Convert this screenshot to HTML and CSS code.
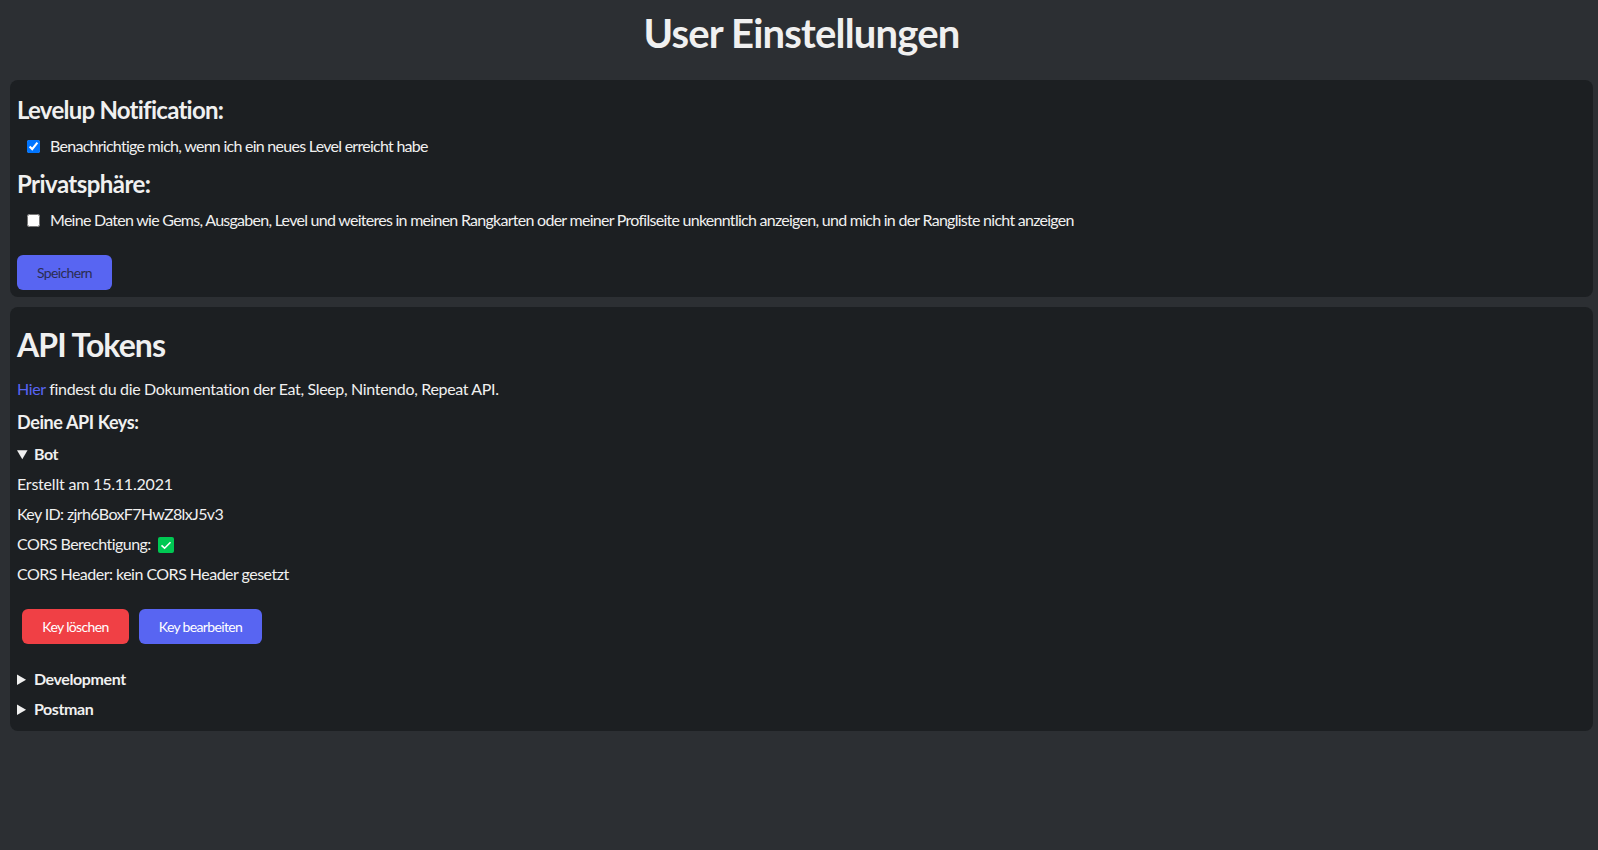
FILE: index.html
```html
<!DOCTYPE html>
<html lang="de">
<head>
<meta charset="utf-8">
<title>User Einstellungen</title>
<link rel="stylesheet" href="styles.css">
</head>
<body>
<h1 class="title">User Einstellungen</h1>
<section class="card settings">
  <h2 class="section-head">Levelup Notification:</h2>
  <label class="check-row"><input type="checkbox" checked><span>Benachrichtige mich, wenn ich ein neues Level erreicht habe</span></label>
  <h2 class="section-head section-head-loose">Privatsphäre:</h2>
  <label class="check-row"><input type="checkbox"><span>Meine Daten wie Gems, Ausgaben, Level und weiteres in meinen Rangkarten oder meiner Profilseite unkenntlich anzeigen, und mich in der Rangliste nicht anzeigen</span></label>
  <button class="btn btn-save">Speichern</button>
</section>
<section class="card tokens">
  <h2 class="tokens-title">API Tokens</h2>
  <p class="intro"><a href="#">Hier</a> findest du die Dokumentation der Eat, Sleep, Nintendo, Repeat API.</p>
  <h3 class="keys-head">Deine API Keys:</h3>
  <details open>
    <summary>Bot</summary>
    <p class="line line-date">Erstellt am 15.11.2021</p>
    <p class="line line-id">Key ID: zjrh6BoxF7HwZ8lxJ5v3</p>
    <p class="line">CORS Berechtigung: <span class="tick"><svg viewBox="0 0 16 16" width="16" height="16"><rect width="16" height="16" rx="2" fill="#00c853"/><path d="M3.5 8.3 6.6 11.2 12.5 5.3" fill="none" stroke="#fff" stroke-width="1.6"/></svg></span></p>
    <p class="line">CORS Header: kein CORS Header gesetzt</p>
    <div class="actions">
      <button class="btn btn-danger">Key löschen</button>
      <button class="btn btn-edit">Key bearbeiten</button>
    </div>
  </details>
  <details><summary>Development</summary></details>
  <details><summary>Postman</summary></details>
</section>
</body>
</html>
```
FILE: styles.css
```css
* { box-sizing: border-box; }
html, body { margin: 0; }
body {
  height: 850px;
  background: #2c2f33;
  color: #f0f0f0;
  font-family: "Lato", "Open Sans", sans-serif;
  font-size: 16px;
  padding: 0 5px 0 10px;
  overflow: hidden;
}
.title {
  margin: 0;
  height: 80px;
  padding-top: 7px;
  font-size: 40px;
  line-height: 52px;
  font-weight: 700;
  text-align: center;
  letter-spacing: -.8px;
}
.card {
  background: #1c1f22;
  border-radius: 8px;
  padding: 7px;
}
.settings { height: 217px; margin-bottom: 10px; }
.tokens { height: 424px; }
.section-head {
  margin: 0;
  padding-top: 1px;
  height: 44px;
  font-size: 24px;
  line-height: 44px;
  font-weight: 700;
  letter-spacing: -.75px;
}
.section-head-loose { letter-spacing: -.55px; }
.check-row {
  display: flex;
  align-items: center;
  height: 30px;
  padding-left: 10px;
  letter-spacing: -.73px;
}
.check-row span { line-height: 30px; height: 30px; }
.check-row input { margin: 0 10px 0 0; width: 13px; height: 13px; accent-color: #0075ff; }
.btn {
  border: 0;
  border-radius: 6px;
  height: 35px;
  font-family: inherit;
  font-size: 14px;
  letter-spacing: -.65px;
  line-height: 33px;
  padding: 0 0 1px;
  white-space: nowrap;
}
.btn-save { background: #5865f2; color: #2b2d52; margin-top: 20px; display: block; width: 95px; }
.tokens-title { margin: 0; padding-top: 1px; height: 60px; font-size: 32px; line-height: 60px; font-weight: 700; letter-spacing: -.95px; }
.intro { margin: 0; line-height: 30px; letter-spacing: -.34px; }
.intro a { color: #5865f2; text-decoration: none; }
.keys-head { margin: 0; height: 35px; font-size: 18px; line-height: 36px; font-weight: 700; letter-spacing: -.4px; }
summary { font-weight: 700; line-height: 30px; letter-spacing: -.4px; }
.line { margin: 0; line-height: 30px; letter-spacing: -.52px; }
.line-date { letter-spacing: -.2px; }
.line-id { letter-spacing: -.63px; }
.tick { display: inline-flex; vertical-align: -3px; margin-left: 4px; }
.actions { display: flex; gap: 10px; padding: 20px 5px 20px; }
.btn-danger { background: #f04045; color: #fff; width: 107px; }
.btn-edit { background: #5865f2; color: #fff; width: 123px; }
```
